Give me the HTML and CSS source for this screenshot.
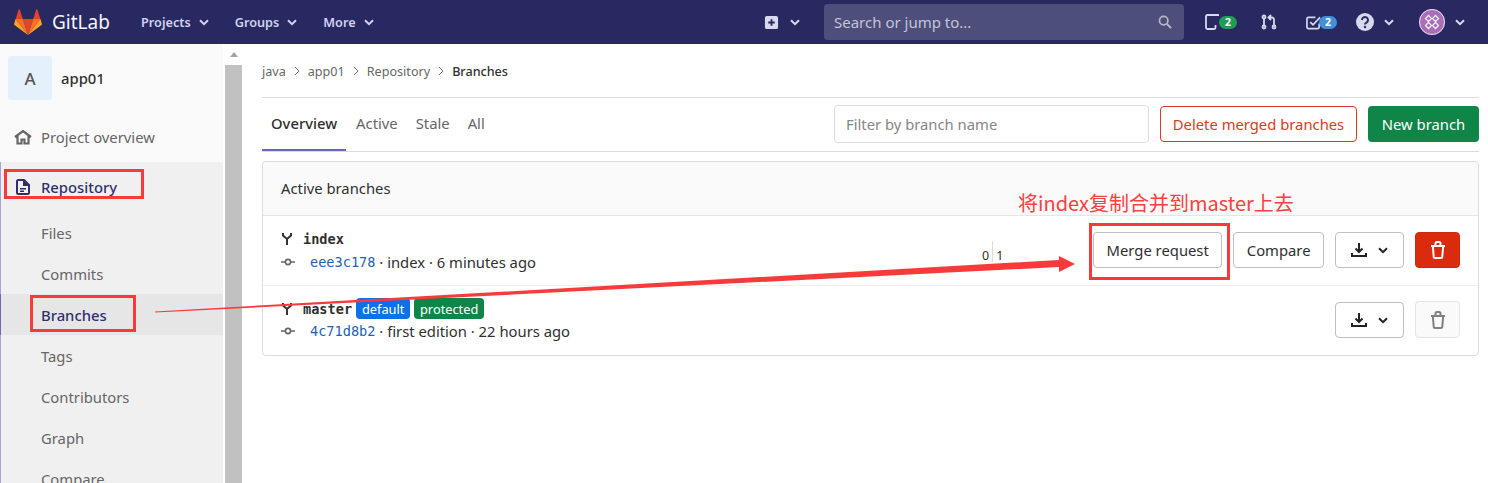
FILE: index.html
```html
<!DOCTYPE html>
<html lang="en">
<head>
<meta charset="utf-8">
<title>Branches · app01</title>
<link rel="stylesheet" href="styles.css">
</head>
<body>
<header class="navbar">
  <a class="logo">
    <svg class="logo-mark" viewBox="0 0 28 26" width="28" height="26">
      <path fill="#e24329" d="M14 26 19.2 10H8.8z"/>
      <path fill="#fc6d26" d="M14 26 8.8 10H1.6z"/>
      <path fill="#fca326" d="M1.6 10 .1 14.8c-.2.5 0 1 .4 1.3L14 26z"/>
      <path fill="#e24329" d="M1.6 10h7.2L5.7.6c-.2-.5-.8-.5-1 0z"/>
      <path fill="#fc6d26" d="M14 26 19.2 10h7.2z"/>
      <path fill="#fca326" d="M26.4 10l1.5 4.8c.2.5 0 1-.4 1.3L14 26z"/>
      <path fill="#e24329" d="M26.4 10h-7.2L22.3.6c.2-.5.8-.5 1 0z"/>
    </svg>
    <span class="logo-text">GitLab</span>
  </a>
  <nav class="nav-main">
    <a class="nav-link">Projects<svg class="chev" viewBox="0 0 10 7"><path d="M1 1.2 5 5.2 9 1.2"/></svg></a>
    <a class="nav-link">Groups<svg class="chev" viewBox="0 0 10 7"><path d="M1 1.2 5 5.2 9 1.2"/></svg></a>
    <a class="nav-link">More<svg class="chev" viewBox="0 0 10 7"><path d="M1 1.2 5 5.2 9 1.2"/></svg></a>
  </nav>
  <div class="nav-right">
    <a class="nav-new">
      <svg viewBox="0 0 16 16" width="15" height="15"><path fill="#d8d8ee" fill-rule="evenodd" d="M3 1h10a2 2 0 0 1 2 2v10a2 2 0 0 1-2 2H3a2 2 0 0 1-2-2V3a2 2 0 0 1 2-2zm4 3.500V7H4.500v2H7v2.500h2V9h2.500V7H9V4.500z"/></svg>
      <svg class="chev chev-new" viewBox="0 0 10 7"><path d="M1 1.200 5 5.200 9 1.200"/></svg>
    </a>
    <div class="search">
      <span>Search or jump to...</span>
      <svg viewBox="0 0 16 16" width="14" height="14"><circle cx="6.500" cy="6.500" r="4.800" fill="none" stroke="#b5b5cc" stroke-width="2"/><path d="M10 10l5 5" stroke="#b5b5cc" stroke-width="2.200"/></svg>
    </div>
    <a class="nav-icon icon-issues">
      <svg viewBox="0 0 14 16" width="14" height="16"><path fill="none" stroke="#d8d8ee" stroke-width="1.800" d="M14 1H2.500A1.500 1.500 0 0 0 1 2.500v11A1.500 1.500 0 0 0 2.500 15H9a1.500 1.500 0 0 0 1.500-1.500V11"/></svg>
      <span class="count count-green">2</span>
    </a>
    <a class="nav-icon icon-mr">
      <svg viewBox="0 0 16 16" width="16" height="16"><g fill="none" stroke="#d8d8ee" stroke-width="1.800"><circle cx="3" cy="3" r="1.500"/><circle cx="3" cy="13" r="1.500"/><circle cx="13" cy="13" r="1.500"/><path d="M3 5v6M13 11V5.500a2 2 0 0 0-2-2H8M10 1 7.500 3.500 10 6"/></g></svg>
    </a>
    <a class="nav-icon icon-todo">
      <svg viewBox="0 0 16 16" width="15" height="15"><path fill="none" stroke="#d8d8ee" stroke-width="1.800" d="M14 9v4a1.500 1.500 0 0 1-1.500 1.500h-10A1.500 1.500 0 0 1 1 13V4a1.500 1.500 0 0 1 1.500-1.500H10M4.500 7.500 7.500 10.500 15 2.500"/></svg>
      <span class="count count-blue">2</span>
    </a>
    <a class="nav-help">
      <svg viewBox="0 0 18 18" width="18" height="18"><circle cx="9" cy="9" r="9" fill="#d8d8ee"/><path d="M6 7a3 3 0 1 1 4.500 2.600C9.500 10.200 9 10.600 9 11.500" fill="none" stroke="#292961" stroke-width="2"/><circle cx="9" cy="14" r="1.200" fill="#292961"/></svg>
      <svg class="chev chev-light" viewBox="0 0 10 7"><path d="M1 1.200 5 5.200 9 1.200"/></svg>
    </a>
    <a class="nav-user">
      <svg viewBox="0 0 26 26" width="26" height="26"><circle cx="13" cy="13" r="13" fill="#a86fb8"/><circle cx="13" cy="13" r="12.500" fill="none" stroke="#e8dcec"/><g fill="none" stroke="#f4ecf6" stroke-width="1.300"><path d="M9.500 6.500l3 3-3 3-3-3zM16.500 6.500l3 3-3 3-3-3zM9.500 13.500l3 3-3 3-3-3zM16.500 13.500l3 3-3 3-3-3z"/></g></svg>
      <svg class="chev chev-user" viewBox="0 0 10 7"><path d="M1 1.200 5 5.200 9 1.200"/></svg>
    </a>
  </div>
</header>

<div class="page">
  <aside class="sidebar">
    <div class="side-nav">
      <div class="project">
        <span class="avatar">A</span>
        <span class="project-name">app01</span>
      </div>
      <a class="side-top">
        <svg viewBox="0 0 18 16" width="18" height="16"><path fill="none" stroke="#666" stroke-width="2.200" d="M1 8 9 2l8 6M3.500 6.500V14.500h4v-4h3v4h4V6.500"/></svg>
        Project overview
      </a>
      <div class="side-group">
        <a class="side-head">
          <svg viewBox="0 0 14 16" width="14" height="16"><path fill="#303070" fill-rule="evenodd" d="M2.500 0H8.500L14 5.500V13.500A2.500 2.500 0 0 1 11.500 16H2.500A2.500 2.500 0 0 1 0 13.500V2.500A2.500 2.500 0 0 1 2.500 0zM2 2V14H12V7H7V2zM4 9H10V10.500H4zM4 11.500H8V13H4z"/></svg>
          Repository
        </a>
        <a class="side-sub">Files</a>
        <a class="side-sub">Commits</a>
        <a class="side-sub is-active">Branches</a>
        <a class="side-sub">Tags</a>
        <a class="side-sub">Contributors</a>
        <a class="side-sub">Graph</a>
        <a class="side-sub">Compare</a>
      </div>
    </div>
    <div class="scrollbar">
      <div class="scroll-btn"><span class="scroll-arrow"></span></div>
      <div class="scroll-thumb"></div>
    </div>
  </aside>

  <main class="content">
    <div class="crumbs">
      <a>java</a><svg class="crumb-sep" viewBox="0 0 6 10"><path d="M1 1l4 4-4 4"/></svg>
      <a>app01</a><svg class="crumb-sep" viewBox="0 0 6 10"><path d="M1 1l4 4-4 4"/></svg>
      <a>Repository</a><svg class="crumb-sep" viewBox="0 0 6 10"><path d="M1 1l4 4-4 4"/></svg>
      <strong>Branches</strong>
    </div>
    <div class="toolbar">
      <ul class="tabs">
        <li class="tab is-current">Overview</li>
        <li class="tab">Active</li>
        <li class="tab">Stale</li>
        <li class="tab">All</li>
      </ul>
      <div class="actions">
        <div class="filter">Filter by branch name</div>
        <a class="btn btn-danger-outline">Delete merged branches</a>
        <a class="btn btn-success">New branch</a>
      </div>
    </div>

    <section class="card">
      <div class="card-head">Active branches</div>
      <div class="branch">
        <div class="branch-info">
          <div class="branch-title">
            <svg class="fork" viewBox="0 0 12 14" width="12" height="14"><path fill="none" stroke="#333" stroke-width="2" d="M2 1v2.500L6 7l4-3.500V1M6 7v6"/></svg>
            <span class="branch-name">index</span>
          </div>
          <div class="commit">
            <svg class="commit-ic" viewBox="0 0 14 8" width="14" height="8"><path stroke="#666" stroke-width="1.600" d="M0 4h4M10 4h4"/><circle cx="7" cy="4" r="2.600" fill="none" stroke="#666" stroke-width="1.600"/></svg>
            <a class="sha">eee3c178</a><span> · index · 6 minutes ago</span>
          </div>
        </div>
        <div class="divergence"><span class="div-num">0</span><i class="div-rule"></i><span class="div-num">1</span></div>
        <div class="branch-btns">
          <a class="btn btn-plain">Merge request</a>
          <a class="btn btn-plain">Compare</a>
          <a class="btn btn-plain btn-dl">
            <svg viewBox="0 0 16 16" width="16" height="16"><path fill="none" stroke="#222" stroke-width="2" d="M8 1v9M4.500 6.500 8 10l3.500-3.500M1 11v3h14v-3"/></svg>
            <svg class="chev chev-dark" viewBox="0 0 10 7"><path d="M1 1.200 5 5.200 9 1.200"/></svg>
          </a>
          <a class="btn btn-trash">
            <svg viewBox="0 0 16 18" width="16" height="18"><path fill="none" stroke="#fff" stroke-width="2" d="M1 5h14M5.500 5V2.500A1.500 1.500 0 0 1 7 1h2a1.500 1.500 0 0 1 1.500 1.500V5M2.800 5l.9 10.500A1.500 1.500 0 0 0 5.200 17h5.600a1.500 1.500 0 0 0 1.500-1.500L13.200 5"/></svg>
          </a>
        </div>
      </div>
      <div class="branch branch-tagged">
        <div class="branch-info">
          <div class="branch-title">
            <svg class="fork" viewBox="0 0 12 14" width="12" height="14"><path fill="none" stroke="#333" stroke-width="2" d="M2 1v2.500L6 7l4-3.500V1M6 7v6"/></svg>
            <span class="branch-name">master</span>
            <span class="tag tag-blue">default</span>
            <span class="tag tag-green">protected</span>
          </div>
          <div class="commit">
            <svg class="commit-ic" viewBox="0 0 14 8" width="14" height="8"><path stroke="#666" stroke-width="1.600" d="M0 4h4M10 4h4"/><circle cx="7" cy="4" r="2.600" fill="none" stroke="#666" stroke-width="1.600"/></svg>
            <a class="sha">4c71d8b2</a><span> · first edition · 22 hours ago</span>
          </div>
        </div>
        <div class="branch-btns">
          <a class="btn btn-plain btn-dl">
            <svg viewBox="0 0 16 16" width="16" height="16"><path fill="none" stroke="#222" stroke-width="2" d="M8 1v9M4.500 6.500 8 10l3.500-3.500M1 11v3h14v-3"/></svg>
            <svg class="chev chev-dark" viewBox="0 0 10 7"><path d="M1 1.200 5 5.200 9 1.200"/></svg>
          </a>
          <a class="btn btn-trash-off">
            <svg viewBox="0 0 16 18" width="16" height="18"><path fill="none" stroke="#808080" stroke-width="2" d="M1 5h14M5.500 5V2.500A1.500 1.500 0 0 1 7 1h2a1.500 1.500 0 0 1 1.500 1.500V5M2.800 5l.9 10.500A1.500 1.500 0 0 0 5.200 17h5.600a1.500 1.500 0 0 0 1.500-1.500L13.200 5"/></svg>
          </a>
        </div>
      </div>
    </section>
  </main>
</div>

<div class="mark mark-repo"></div>
<div class="mark mark-branches"></div>
<div class="mark mark-merge"></div>
<div class="note">将index复制合并到master上去</div>
<svg class="arrow" viewBox="0 0 1488 483" width="1488" height="483">
  <polygon fill="#f93a3a" points="155,311.500 1059,260 1059,256 1075,264 1059,272 1059,267 155,312.500"/>
</svg>
</body>
</html>
```

FILE: styles.css
```css
* { box-sizing: border-box; }
html, body { margin: 0; padding: 0; height: 483px; overflow: hidden; background: #fff; }
body { font-family: "Noto Sans", sans-serif; font-size: 14.800px; color: #303030; position: relative; }
a { color: inherit; text-decoration: none; }
svg { display: block; flex: none; }

.navbar { height: 44px; background: #292961; display: flex; align-items: center; color: #d1d1f0; }
.logo { display: flex; align-items: center; margin-left: 14px; width: 127px; }
.logo-mark { margin-right: 10px; }
.logo-text { font-size: 19px; color: #f4f4fa; }
.nav-main { display: flex; }
.nav-link { display: flex; align-items: center; font-weight: 600; font-size: 12.700px; margin-right: 26px; color: #d1d1f0; }
.chev { width: 10px; height: 7px; margin-left: 8px; fill: none; stroke: #d1d1f0; stroke-width: 2; }
.chev-light { stroke: #d8d8ee; margin-left: 10px; }
.chev-new { stroke: #d8d8ee; margin-left: 11px; }
.chev-user { stroke: #d8d8ee; margin-left: 10px; }
.chev-dark { stroke: #222; margin-left: 11px; }
.nav-right { margin-left: auto; display: flex; align-items: center; }
.nav-new { display: flex; align-items: center; width: 60px; }
.search { width: 360px; height: 36px; background: #4e4e7a; border-radius: 4px; display: flex; align-items: center; justify-content: space-between; padding: 0 12px 0 10px; color: #c4c4dc; font-size: 15px; margin-right: 15px; }
.nav-icon { display: flex; align-items: center; }
.icon-issues { width: 56px; margin-left: 6px; }
.icon-mr { width: 45px; }
.icon-todo { width: 50px; }
.count { height: 13px; width: 18px; border-radius: 7px; font-size: 10.500px; font-weight: 700; color: #fff; display: flex; align-items: center; justify-content: center; }
.count-green { background: #1f9d55; }
.count-blue { background: #428fdc; margin-left: -2px; }
.nav-help { display: flex; align-items: center; width: 63px; }
.nav-user { display: flex; align-items: center; width: 69px; }

.page { display: flex; height: 439px; }
.sidebar { display: flex; width: 243px; flex: none; height: 439px; }
.side-nav { width: 223px; background: #fafafa; flex: none; height: 439px; overflow: hidden; }
.scrollbar { width: 17px; margin-left: 2px; background: #f3f3f3; flex: none; }
.scroll-btn { height: 21px; display: flex; align-items: center; justify-content: center; background: #fff; }
.scroll-arrow { width: 0; height: 0; border-left: 4.500px solid transparent; border-right: 4.500px solid transparent; border-bottom: 5px solid #a3a3a3; }
.scroll-thumb { height: 418px; background: #c1c1c1; }
.project { display: flex; align-items: center; padding: 12px 8px 0; height: 56px; }
.avatar { width: 44px; height: 44px; border-radius: 3px; background: #e4f1fc; color: #555; display: flex; align-items: center; justify-content: center; font-size: 17px; font-weight: 500; }
.project-name { margin-left: 9px; font-weight: 500; color: #303030; }
.side-top { display: flex; align-items: center; height: 62px; padding: 12px 15px 0 14px; color: #666; gap: 9px; }
.side-group { background: #f0f0f0; border-left: 1px solid #a5a5d6; }
.side-head { display: flex; align-items: center; height: 50px; padding-left: 15px; gap: 11px; color: #303070; font-weight: 500; }
.side-sub { display: flex; align-items: center; height: 41px; padding: 1px 0 0 40px; color: #666; }
.side-sub.is-active { background: #e6e6e6; color: #303070; font-weight: 500; box-shadow: -1px 0 0 #6b6bb5; }

.content { flex: 1; min-width: 0; padding: 0 9px 0 19px; }
.crumbs { height: 54px; padding-top: 1px; border-bottom: 1px solid #dcdcdc; display: flex; align-items: center; font-size: 12.600px; color: #666; }
.crumbs strong { font-weight: 500; color: #303030; }
.crumb-sep { width: 6px; height: 10px; margin: 0 8px; fill: none; stroke: #777; stroke-width: 1; }
.toolbar { height: 54px; border-bottom: 1px solid #dcdcdc; display: flex; justify-content: space-between; }
.tabs { list-style: none; margin: 0; padding: 0; display: flex; }
.tab { height: 53px; display: flex; align-items: center; padding: 0 9px 3px; color: #666; }
.tab.is-current { color: #303030; font-weight: 500; border-bottom: 2px solid #6666c4; padding: 0 9px 1px; margin-right: 1px; }
.actions { display: flex; align-items: center; gap: 11px; padding-bottom: 1px; }
.filter { width: 315px; height: 38px; border: 1px solid #dcdcdc; border-radius: 4px; padding: 0 11px; display: flex; align-items: center; color: #868686; }
.btn { display: flex; align-items: center; justify-content: center; height: 36px; border-radius: 4px; border: 1px solid transparent; }
.btn-danger-outline { width: 197px; border-color: #db3b21; color: #db3b21; }
.btn-success { width: 111px; background: #108548; color: #fff; }
.card { margin-top: 9px; height: 195px; border: 1px solid #dcdcdc; border-radius: 4px; }
.card-head { height: 54px; background: #fafafa; border-bottom: 1px solid #e5e5e5; display: flex; align-items: center; padding: 0 0 2px 18px; border-radius: 4px 4px 0 0; }
.branch { height: 69px; display: flex; align-items: center; padding: 0 18px; position: relative; }
.branch-tagged { border-top: 1px solid #efefef; height: 70px; }
.branch-info { display: flex; flex-direction: column; gap: 1px; margin-top: -1px; }
.branch-tagged .branch-info { gap: 0; margin-top: -2px; }
.branch-title { display: flex; align-items: center; height: 22px; }
.fork { margin-right: 10px; }
.branch-name { font-family: "DejaVu Sans Mono", monospace; font-size: 13.600px; font-weight: 700; }
.tag { height: 21px; border-radius: 4px; color: #fff; font-size: 12.800px; padding: 0 5.800px; display: flex; align-items: center; margin-left: 4px; }
.tag-blue { background: #0a72e8; }
.tag-green { background: #108548; }
.commit { display: flex; align-items: center; height: 22px; white-space: pre; }
.commit-ic { margin-right: 15px; }
.sha { font-family: "DejaVu Sans Mono", monospace; font-size: 13.600px; color: #1f5fb8; }
.divergence { position: absolute; left: 718px; top: 25px; height: 21px; display: flex; align-items: flex-end; font-size: 12.500px; gap: 2px; }
.div-num { line-height: 12px; margin: 0 1px; }
.div-rule { width: 1px; height: 21px; background: #ddd; }
.branch-btns { margin-left: auto; display: flex; align-items: center; margin-top: -1px; }
.btn-plain { border-color: #bfbfbf; color: #303030; background: #fff; padding: 0 12.500px; margin-right: 11px; }
.btn-dl { width: 69px; padding: 0; }
.btn-trash { width: 45px; background: #db2b0e; border-color: #c92a10; }
.btn-trash-off { width: 45px; height: 37px; margin-top: -1px; background: #fafafa; border-color: #e5e5e5; }

.mark { position: absolute; border: 3px solid #f93a3a; pointer-events: none; }
.mark-repo { left: 4px; top: 169px; width: 140px; height: 30px; }
.mark-branches { left: 30px; top: 295px; width: 106px; height: 37px; }
.mark-merge { left: 1089px; top: 223px; width: 141px; height: 57px; }
.note { position: absolute; left: 1018px; top: 189px; font-family: "Noto Sans CJK SC", "Noto Sans", sans-serif; font-size: 20px; line-height: 28px; color: #fb4040; white-space: nowrap; }
.arrow { position: absolute; left: 0; top: 0; pointer-events: none; }
```
